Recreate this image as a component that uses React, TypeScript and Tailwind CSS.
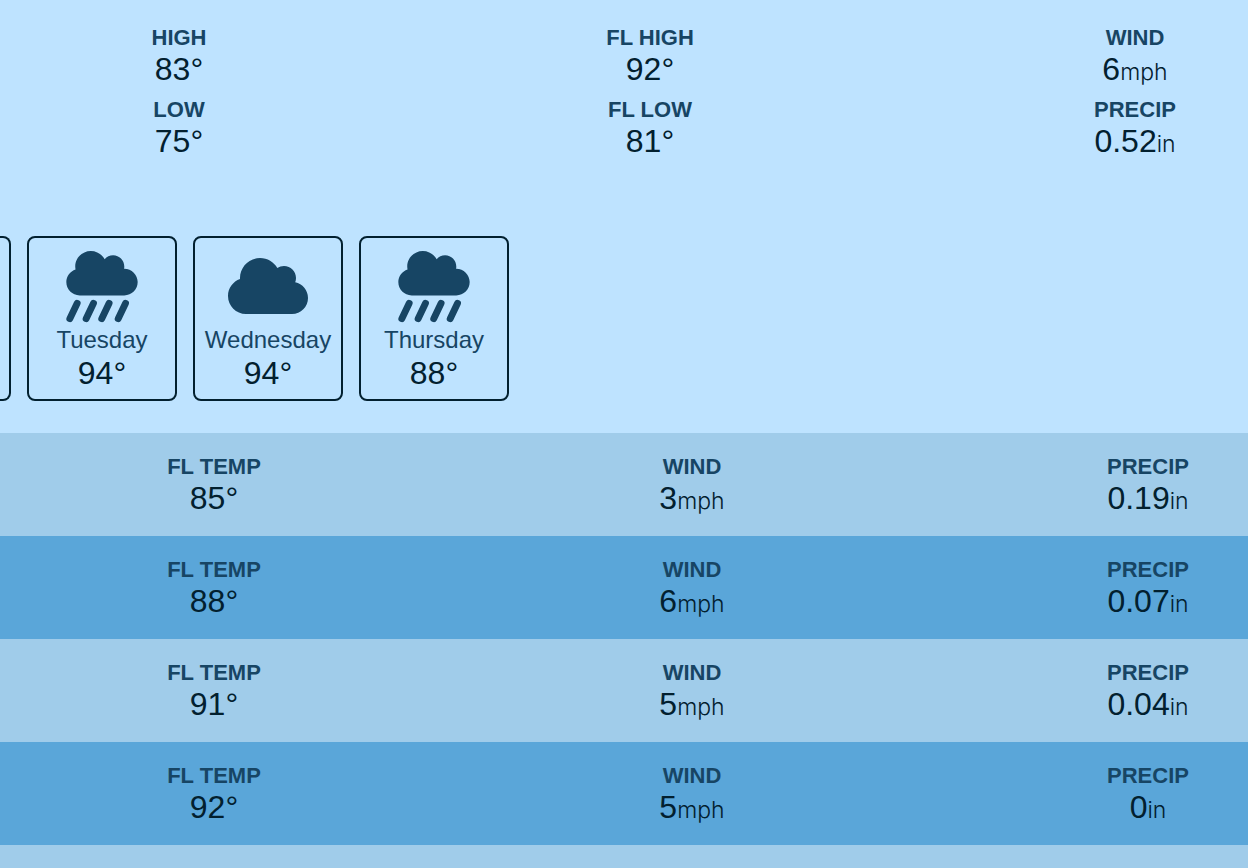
import React from "react";

type Metric = { label: string; value: string; unit?: string };
type Icon = "rain" | "cloud";

const summary: Metric[][] = [
  [
    { label: "HIGH", value: "83°" },
    { label: "LOW", value: "75°" },
  ],
  [
    { label: "FL HIGH", value: "92°" },
    { label: "FL LOW", value: "81°" },
  ],
  [
    { label: "WIND", value: "6", unit: "mph" },
    { label: "PRECIP", value: "0.52", unit: "in" },
  ],
];

const days: { name: string; temp: string; icon: Icon }[] = [
  { name: "Tuesday", temp: "94°", icon: "rain" },
  { name: "Wednesday", temp: "94°", icon: "cloud" },
  { name: "Thursday", temp: "88°", icon: "rain" },
];

const hours = [
  { feels: "85°", wind: "3", precip: "0.19" },
  { feels: "88°", wind: "6", precip: "0.07" },
  { feels: "91°", wind: "5", precip: "0.04" },
  { feels: "92°", wind: "5", precip: "0" },
];

function Info({ label, value, unit }: Metric) {
  return (
    <div className="text-center whitespace-nowrap">
      <dt className="text-[22px] leading-[30px] font-bold text-[#174564]">{label}</dt>
      <dd className="text-[32px] leading-8">
        {value}
        {unit && <span className="font-['Inter',sans-serif] text-[23px] leading-none font-light">{unit}</span>}
      </dd>
    </div>
  );
}

function WeatherIcon({ icon }: { icon: Icon }) {
  if (icon === "cloud") {
    return (
      <svg viewBox="0 -64 640 640" className="size-20 fill-[#174564]" aria-hidden="true">
        <path d="M537.6 226.6c4.1-10.7 6.4-22.4 6.4-34.6 0-53-43-96-96-96-19.7 0-38.1 6-53.3 16.2C367 64.2 315.3 32 256 32c-88.4 0-160 71.6-160 160 0 2.7.1 5.4.2 8.1C40.2 219.8 0 273.2 0 336c0 79.5 64.5 144 144 144h368c70.7 0 128-57.3 128-128 0-61.9-44-113.6-102.4-125.4z" />
      </svg>
    );
  }
  return (
    <svg viewBox="-31 -35 574 574" className="size-20 fill-[#174564]" aria-hidden="true">
      <path d="M416 128c-.6 0-1.1.2-1.6.2 1.1-5.2 1.6-10.6 1.6-16.2 0-44.2-35.8-80-80-80-24.6 0-46.3 11.3-61 28.8C256.4 24.8 219.3 0 176 0 114.1 0 64 50.1 64 112c0 7.3.8 14.3 2.1 21.2C27.8 145.8 0 181.5 0 224c0 53 43 96 96 96h320c53 0 96-43 96-96s-43-96-96-96z" />
      <path
        d="M78 376 25 487M195 376l-53 111M307 376l-53 111M425 376l-53 111"
        stroke="#174564"
        strokeWidth="49"
        strokeLinecap="round"
      />
    </svg>
  );
}

export default function App() {
  return (
    <main className="min-h-screen overflow-hidden bg-[#bee3ff] font-['Liberation_Sans',Arial,sans-serif] text-[#02202f]">
      <section className="grid grid-cols-[198fr_744fr_226fr] pt-[23px] pl-20">
        {summary.map((column) => (
          <dl key={column[0].label} className="flex flex-col gap-2.5">
            {column.map((metric) => (
              <Info key={metric.label} {...metric} />
            ))}
          </dl>
        ))}
      </section>

      <section className="mt-[79px] mb-8 flex gap-4">
        <div className="w-[11px] rounded-r-lg border-2 border-l-0 border-[#02202f]" aria-hidden="true" />
        {days.map((day) => (
          <button
            key={day.name}
            type="button"
            className="flex w-[150px] flex-col items-center rounded-lg border-2 border-[#02202f] py-2"
          >
            <WeatherIcon icon={day.icon} />
            <span className="text-2xl leading-7 text-[#174564]">{day.name}</span>
            <span className="mt-px text-[32px] leading-9">{day.temp}</span>
          </button>
        ))}
      </section>

      <section>
        {hours.map((hour, index) => (
          <dl
            key={index}
            className="grid grid-cols-[244fr_712fr_200fr] bg-[#a0ccea] pt-[19px] pb-[22px] pl-[92px] even:bg-[#5aa6d9]"
          >
            <Info label="FL TEMP" value={hour.feels} />
            <Info label="WIND" value={hour.wind} unit="mph" />
            <Info label="PRECIP" value={hour.precip} unit="in" />
          </dl>
        ))}
        <div className="h-[23px] bg-[#a0ccea]" />
      </section>
    </main>
  );
}
